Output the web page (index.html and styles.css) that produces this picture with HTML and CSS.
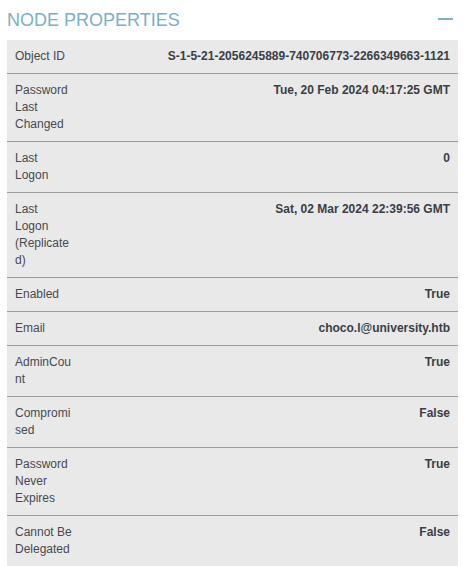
FILE: index.html
```html
<!DOCTYPE html>
<html lang="en">
<head>
  <meta charset="UTF-8">
  <meta name="viewport" content="width=device-width, initial-scale=1.0">
  <title>Node Properties</title>
  <link rel="stylesheet" href="styles.css">
</head>
<body>
  <div class="panel">
    <div class="panel-header">
      <h2>NODE PROPERTIES</h2>
      <svg class="collapse" width="15" height="21" viewBox="0 0 15 21">
        <rect x="0" y="8" width="15" height="2" fill="#7ab0c9"></rect>
      </svg>
    </div>

    <table class="props">
      <tr><td class="label">Object ID</td><td class="value">S-1-5-21-2056245889-740706773-2266349663-1121</td></tr>
      <tr><td class="label">Password Last Changed</td><td class="value">Tue, 20 Feb 2024 04:17:25 GMT</td></tr>
      <tr><td class="label">Last Logon</td><td class="value">0</td></tr>
      <tr><td class="label">Last Logon (Replicated)</td><td class="value">Sat, 02 Mar 2024 22:39:56 GMT</td></tr>
      <tr><td class="label">Enabled</td><td class="value">True</td></tr>
      <tr><td class="label">Email</td><td class="value">choco.l@university.htb</td></tr>
      <tr><td class="label">AdminCount</td><td class="value">True</td></tr>
      <tr><td class="label">Compromised</td><td class="value">False</td></tr>
      <tr><td class="label">Password Never Expires</td><td class="value">True</td></tr>
      <tr><td class="label">Cannot Be Delegated</td><td class="value">False</td></tr>
    </table>
  </div>
</body>
</html>
```

FILE: styles.css
```css
body {
  font-family: 'Liberation Sans', Arial, sans-serif;
  margin: 0;
  padding: 0 6px 0 7px;
  background: #fff;
}
.panel-header {
  display: flex;
  justify-content: space-between;
  align-items: flex-start;
  padding: 10px 5px 9px 0;
}
.panel-header h2 {
  margin: 0;
  font-size: 18px;
  font-weight: normal;
  line-height: 21px;
  color: #7ab0c9;
}
.collapse {
  display: block;
}
.props {
  width: 100%;
  border-collapse: collapse;
  table-layout: fixed;
  background: #e9e9e9;
  font-size: 12px;
  line-height: 17px;
}
.props td {
  padding: 8px;
  vertical-align: top;
  border-bottom: 1px solid #9c9c9c;
}
.props tr:last-child td {
  border-bottom: none;
}
.label {
  width: 58px;
  color: #464a50;
  overflow-wrap: anywhere;
}
.value {
  text-align: right;
  font-weight: bold;
  color: #3a3e46;
}
```
